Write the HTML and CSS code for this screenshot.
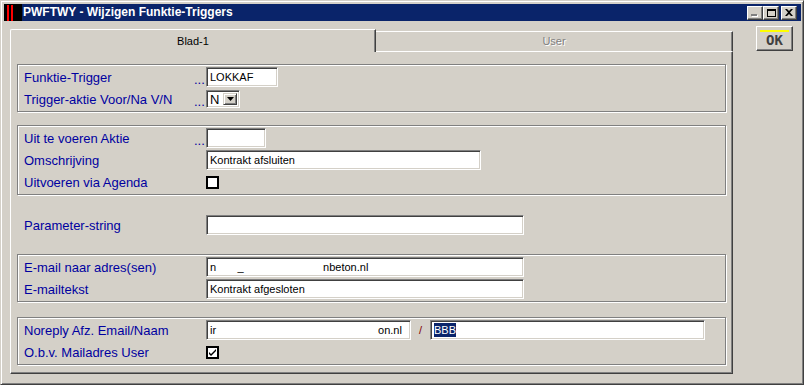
FILE: index.html
```html
<!DOCTYPE html>
<html lang="nl">
<head>
    <meta charset="UTF-8">
    <title>PWFTWY - Wijzigen Funktie-Triggers</title>
    <link rel="stylesheet" href="styles.css">
</head>
<body>
    <div class="window">
        <div class="titlebar">
            <div class="app-icon"><span></span><span></span></div>
            <div class="title">PWFTWY - Wijzigen Funktie-Triggers</div>
            <div class="caption-btns">
                <div class="cap cap-min"><span></span></div>
                <div class="cap cap-max"><span></span></div>
                <div class="cap cap-close">
                    <svg width="8" height="7" viewBox="0 0 8 7"><path d="M0 0h2l2 2 2-2h2L5 3.5 8 7H6L4 5 2 7H0l3-3.5z" fill="#000"/></svg>
                </div>
            </div>
        </div>

        <div class="client">
            <div class="tabctl">
                <div class="tabs">
                    <div class="tab active">Blad-1</div>
                    <div class="tab disabled">User</div>
                </div>
                <div class="panel">
                    <div class="group">
                        <div class="row">
                            <span class="lbl">Funktie-Trigger</span><span class="dots">...</span>
                            <div class="edit w72">LOKKAF</div>
                        </div>
                        <div class="row">
                            <span class="lbl">Trigger-aktie Voor/Na V/N</span><span class="dots">...</span>
                            <div class="combo">
                                <span class="combo-val">N</span>
                                <span class="combo-btn"><svg width="7" height="4" viewBox="0 0 7 4"><path d="M0 0h7L3.5 4z" fill="#000"/></svg></span>
                            </div>
                        </div>
                    </div>

                    <div class="group g2">
                        <div class="row">
                            <span class="lbl">Uit te voeren Aktie</span><span class="dots">...</span>
                            <div class="edit w60"></div>
                        </div>
                        <div class="row">
                            <span class="lbl">Omschrijving</span><span class="dots"></span>
                            <div class="edit w275">Kontrakt afsluiten</div>
                        </div>
                        <div class="row">
                            <span class="lbl">Uitvoeren via Agenda</span><span class="dots"></span>
                            <div class="check"></div>
                        </div>
                    </div>

                    <div class="row loose">
                        <span class="lbl">Parameter-string</span><span class="dots"></span>
                        <div class="edit w318"></div>
                    </div>

                    <div class="group g4">
                        <div class="row">
                            <span class="lbl">E-mail naar adres(sen)</span><span class="dots"></span>
                            <div class="edit w318 pre">n       _                          nbeton.nl</div>
                        </div>
                        <div class="row">
                            <span class="lbl">E-mailtekst</span><span class="dots"></span>
                            <div class="edit w318">Kontrakt afgesloten</div>
                        </div>
                    </div>

                    <div class="group g5">
                        <div class="row">
                            <span class="lbl">Noreply Afz. Email/Naam</span><span class="dots"></span>
                            <div class="edit w205 pre">ir                                                     on.nl</div>
                            <span class="slash">/</span>
                            <div class="edit w275"><span class="sel">BBB</span></div>
                        </div>
                        <div class="row">
                            <span class="lbl">O.b.v. Mailadres User</span><span class="dots"></span>
                            <div class="check">
                                <svg width="9" height="9" viewBox="0 0 9 9"><path d="M1 4l2 2 5-5v2L3 8 1 6z" fill="#000"/></svg>
                            </div>
                        </div>
                    </div>
                </div>
            </div>

            <div class="ok-btn">
                <div class="ok-line"></div>
                <div class="ok-text">OK</div>
            </div>
        </div>
    </div>
</body>
</html>
```

FILE: styles.css
```css
* {
    margin: 0;
    padding: 0;
    box-sizing: border-box;
}

body {
    background: #d4d0c8;
    font-family: "Liberation Sans", Arial, sans-serif;
}

.window {
    width: 804px;
    height: 385px;
    display: flex;
    flex-direction: column;
    padding: 3px 2px 2px 3px;
    background: #d4d0c8;
    border: 1px solid;
    border-color: #d4d0c8 #404040 #404040 #d4d0c8;
    box-shadow: inset 1px 1px #fff, inset -1px -1px #808080;
}

/* titelbalk */
.titlebar {
    height: 17px;
    display: flex;
    align-items: center;
    background: #0a246a;
}

.app-icon {
    width: 18px;
    height: 17px;
    background: #000;
    display: flex;
    padding: 1px 0 0 3px;
    gap: 2px;
}

.app-icon span {
    width: 2px;
    height: 16px;
    background: #f00;
}

.title {
    flex: 1;
    margin-left: 1px;
    color: #fff;
    font-weight: bold;
    font-size: 12px;
    line-height: 17px;
}

.caption-btns {
    display: flex;
    margin-right: 4px;
}

.cap {
    width: 16px;
    height: 14px;
    display: flex;
    align-items: center;
    justify-content: center;
    background: #d4d0c8;
    border: 1px solid;
    border-color: #fff #404040 #404040 #fff;
    box-shadow: inset -1px -1px #808080;
}

.cap-min {
    align-items: flex-end;
    justify-content: flex-start;
    padding: 0 0 3px 3px;
}

.cap-min span {
    width: 6px;
    height: 2px;
    background: #808080;
    box-shadow: 1px 1px #fff;
}

.cap-max span {
    width: 9px;
    height: 8px;
    border: 1px solid #000;
    border-top-width: 2px;
}

.cap-close {
    margin-left: 2px;
}

/* werkgebied */
.client {
    flex: 1;
    display: flex;
    padding-top: 5px;
}

.tabctl {
    width: 723px;
    margin: 3px 0 8px 6px;
    display: flex;
    flex-direction: column;
}

.tabs {
    display: flex;
    height: 23px;
}

.tab {
    font-size: 11px;
    text-align: center;
}

.tab.active {
    width: 366px;
    line-height: 22px;
    border-top: 1px solid #fff;
    border-left: 1px solid #fff;
    border-right: 1px solid #404040;
    border-top-left-radius: 2px;
    box-shadow: inset -1px 0 #808080;
}

.tab.disabled {
    flex: 1;
    margin-top: 2px;
    line-height: 19px;
    color: #808080;
    text-shadow: 1px 1px #fff;
    border-top: 1px solid #fff;
    border-bottom: 1px solid #fff;
    border-right: 1px solid #404040;
    box-shadow: inset -1px 0 #808080;
}

.panel {
    flex: 1;
    padding: 12px 5px 0 6px;
    border-left: 1px solid #fff;
    border-right: 1px solid #404040;
    border-bottom: 1px solid #404040;
    box-shadow: inset -1px -1px #808080;
}

.group {
    padding: 1px 6px;
    border: 1px solid #808080;
    box-shadow: inset 1px 1px #fff, 1px 1px #fff;
    margin-right: 1px;
}

.g2 {
    margin-top: 13px;
}

.g4 {
    margin-top: 18px;
}

.g5 {
    margin-top: 15px;
}

.row {
    height: 22px;
    display: flex;
    align-items: center;
}

.row.loose {
    margin-top: 19px;
    padding-left: 7px;
}

.lbl {
    width: 170px;
    font-size: 13px;
    color: #0000a0;
}

.dots {
    width: 12px;
    font-size: 13px;
    color: #0000a0;
    align-self: flex-end;
    line-height: 17px;
}

.edit {
    height: 20px;
    padding-left: 3px;
    background: #fff;
    font-size: 11px;
    line-height: 18px;
    white-space: nowrap;
    overflow: hidden;
    border: 1px solid;
    border-color: #808080 #fff #fff #808080;
    box-shadow: inset 1px 1px #404040, inset -1px -1px #d4d0c8;
}

.pre {
    white-space: pre;
}

.w60 { width: 60px; }
.w72 { width: 72px; }
.w205 { width: 205px; }
.w275 { width: 275px; }
.w318 { width: 318px; }

.combo {
    width: 34px;
    height: 18px;
    display: flex;
    align-items: center;
    padding: 2px;
    background: #fff;
    border: 1px solid;
    border-color: #808080 #fff #fff #808080;
    box-shadow: inset 1px 1px #404040, inset -1px -1px #d4d0c8;
}

.combo-val {
    flex: 1;
    font-size: 13px;
    padding-left: 1px;
}

.combo-btn {
    width: 14px;
    height: 12px;
    display: flex;
    align-items: center;
    justify-content: center;
    background: #d4d0c8;
    border: 1px solid;
    border-color: #d4d0c8 #404040 #404040 #d4d0c8;
    box-shadow: inset 1px 1px #fff, inset -1px -1px #808080;
}

.check {
    width: 13px;
    height: 13px;
    display: flex;
    align-items: center;
    justify-content: center;
    background: #fff;
    border: 2px solid #000;
}

.slash {
    width: 19px;
    text-align: center;
    font-size: 11px;
    color: #800000;
}

.sel {
    display: inline-block;
    background: #0a246a;
    color: #fff;
    line-height: 14px;
}

/* OK knop */
.ok-btn {
    width: 37px;
    height: 25px;
    margin-left: 23px;
    padding-top: 3px;
    border: 1px solid;
    border-color: #fff #404040 #404040 #fff;
    box-shadow: inset -1px -1px #808080;
}

.ok-line {
    width: 29px;
    height: 2px;
    margin: 0 auto;
    background: #ffff00;
}

.ok-text {
    text-align: center;
    font-family: "DejaVu Sans Mono", monospace;
    font-weight: bold;
    font-size: 14px;
    line-height: 14px;
    margin-top: 1px;
    color: #404040;
}
```
